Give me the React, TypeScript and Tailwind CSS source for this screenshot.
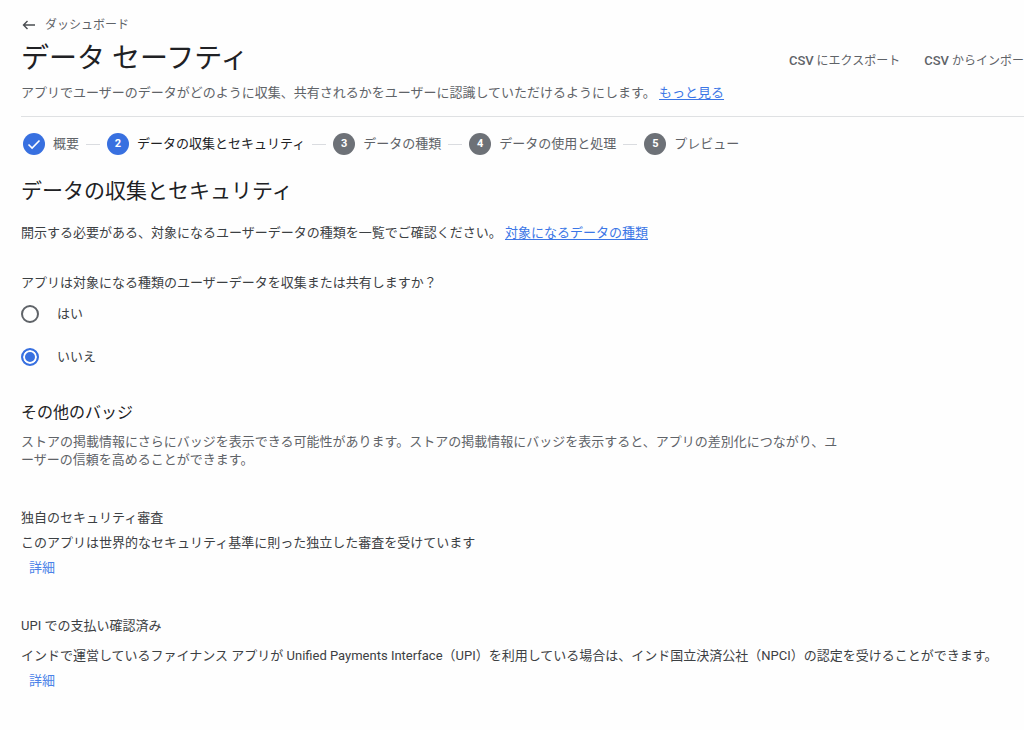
import { useState } from "react";

const steps = [
	{ label: "概要", state: "done" },
	{ label: "データの収集とセキュリティ", state: "current" },
	{ label: "データの種類", state: "todo" },
	{ label: "データの使用と処理", state: "todo" },
	{ label: "プレビュー", state: "todo" },
];

function Check() {
	return (
		<svg viewBox="0 0 22 22" className="size-[22px]" fill="none" aria-hidden="true">
			<path d="M5.5 11.5l3.6 3.6 7.4-7.6" stroke="#fff" strokeWidth="1.6" />
		</svg>
	);
}

function Stepper() {
	return (
		<ol className="mt-4 flex items-center pl-0.5">
			{steps.map((step, i) => (
				<li key={step.label} className="flex shrink-0 items-center">
					{i > 0 && <span className="mx-[7px] h-px w-[14px] bg-[#dadce0]" />}
					<span
						className={`flex size-[22px] items-center justify-center rounded-full text-[11px] font-bold text-white ${
							step.state === "todo" ? "bg-[#6d7177]" : "bg-[#3870e0]"
						}`}
					>
						{step.state === "done" ? <Check /> : i + 1}
					</span>
					<span
						className={`ml-2 leading-[18px] ${
							step.state === "current" ? "text-[#202124]" : "text-[#5f6368]"
						}`}
					>
						{step.label}
					</span>
				</li>
			))}
		</ol>
	);
}

export default function App() {
	const [collects, setCollects] = useState("no");

	const radio =
		"size-[18px] appearance-none rounded-full border-2 border-[#5f6368] checked:border-[#3870e0] checked:bg-[#3870e0] checked:shadow-[inset_0_0_0_2px_#fff]";

	return (
		<div
			lang="ja"
			className="overflow-hidden bg-[#fefefe] pt-[17px] pb-10 pl-[21px] font-[Roboto,'Noto_Sans_CJK_JP',sans-serif] text-[13px] leading-[18px] text-[#3c4043]"
		>
			<header className="border-b border-[#dfe1e3] pb-[14px]">
				<a href="#" className="flex items-center gap-2 text-[12px] leading-4 text-[#5f6368]">
					<svg viewBox="0 0 16 16" className="size-4" fill="none" aria-hidden="true">
						<path
							d="M14 8H3M6.5 4l-4 4 4 4"
							stroke="#4a4d51"
							strokeWidth="1.4"
						/>
					</svg>
					ダッシュボード
				</a>
				<div className="mt-2 flex items-center justify-between">
					<h1 className="text-[28px] leading-9 text-[#202124]">データ セーフティ</h1>
					<div className="-mr-3 flex shrink-0 gap-6 pt-1 text-[12px] whitespace-nowrap text-[#5f6368]">
						<button type="button">
							<span className="text-[13px] font-medium">CSV</span> にエクスポート
						</button>
						<button type="button">
							<span className="text-[13px] font-medium">CSV</span> からインポート
						</button>
					</div>
				</div>
				<p className="mt-[7px] text-[#5f6368]">
					アプリでユーザーのデータがどのように収集、共有されるかをユーザーに認識していただけるようにします。{" "}
					<a href="#" className="text-[#3b76e6] underline underline-offset-2">
						もっと見る
					</a>
				</p>
			</header>

			<Stepper />

			<main>
				<h2 className="mt-[22px] text-[21px] leading-7 text-[#202124]">
					データの収集とセキュリティ
				</h2>
				<p className="mt-[19px]">
					開示する必要がある、対象になるユーザーデータの種類を一覧でご確認ください。{" "}
					<a href="#" className="text-[#3b76e6] underline underline-offset-2">
						対象になるデータの種類
					</a>
				</p>

				<fieldset className="mt-8">
					<legend>アプリは対象になる種類のユーザーデータを収集または共有しますか？</legend>
					<div className="mt-3 flex flex-col items-start gap-[23px]">
						<label className="flex items-center gap-[18px] leading-5">
							<input
								type="radio"
								name="collects"
								className={radio}
								checked={collects === "yes"}
								onChange={() => setCollects("yes")}
							/>
							はい
						</label>
						<label className="flex items-center gap-[18px] leading-5">
							<input
								type="radio"
								name="collects"
								className={radio}
								checked={collects === "no"}
								onChange={() => setCollects("no")}
							/>
							いいえ
						</label>
					</div>
				</fieldset>

				<section className="mt-[34px]">
					<h3 className="text-[16px] leading-6 text-[#202124]">その他のバッジ</h3>
					<p className="mt-2 max-w-[825px] text-[#5f6368]">
						ストアの掲載情報にさらにバッジを表示できる可能性があります。ストアの掲載情報にバッジを表示すると、アプリの差別化につながり、ユーザーの信頼を高めることができます。
					</p>
				</section>

				<section className="mt-10">
					<h4>独自のセキュリティ審査</h4>
					<p className="mt-[7px]">
						このアプリは世界的なセキュリティ基準に則った独立した審査を受けています
					</p>
					<button type="button" className="mt-[7px] block px-2 text-[#4a82e8]">
						詳細
					</button>
				</section>

				<section className="mt-10">
					<h4>UPI での支払い確認済み</h4>
					<p className="mt-3">
						インドで運営しているファイナンス アプリが Unified Payments
						Interface（UPI）を利用している場合は、インド国立決済公社（NPCI）の認定を受けることができます。
					</p>
					<button type="button" className="mt-[7px] block px-2 text-[#4a82e8]">
						詳細
					</button>
				</section>
			</main>
		</div>
	);
}
